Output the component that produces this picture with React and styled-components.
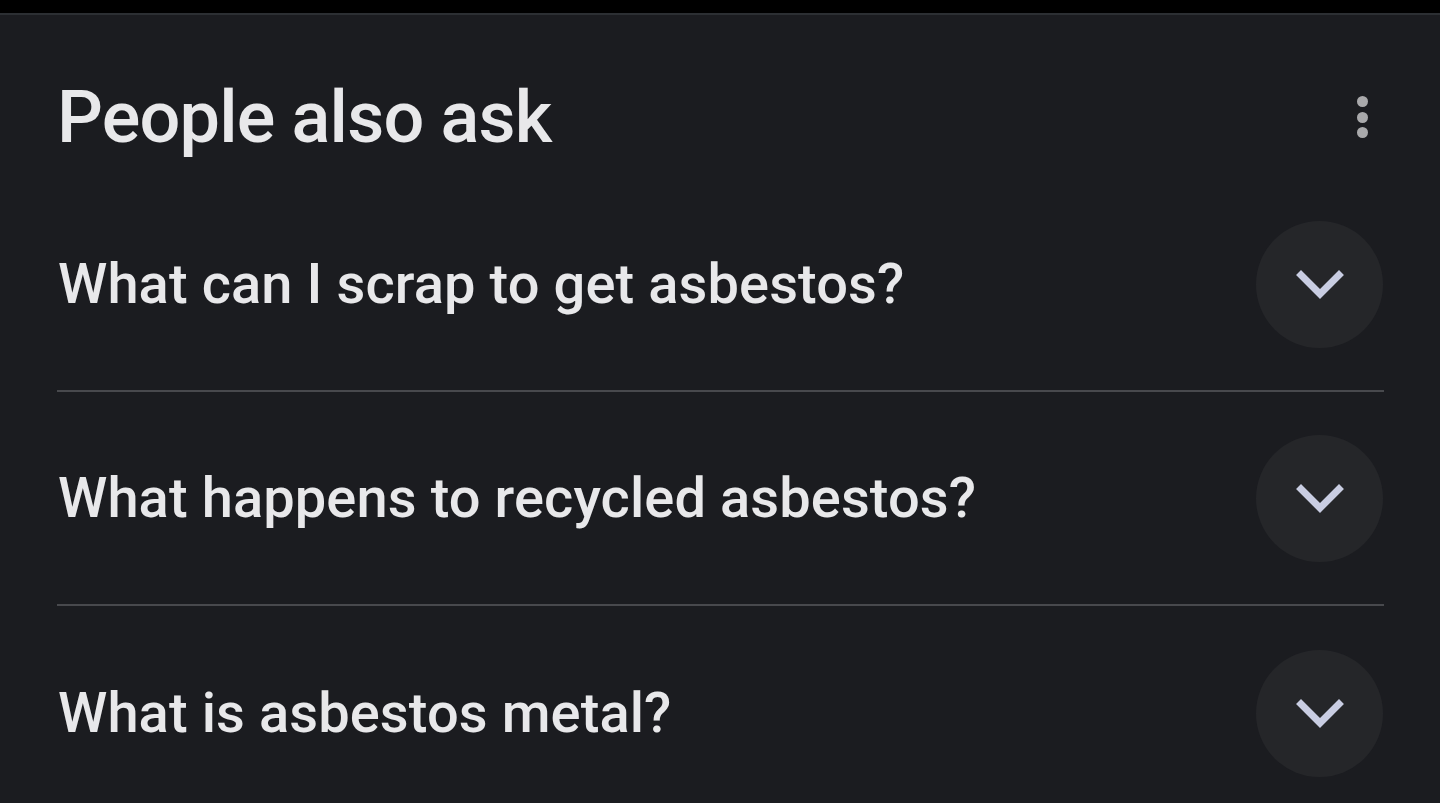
import React from "react";
import styled, { createGlobalStyle } from "styled-components";

const Global = createGlobalStyle`
  html, body { margin: 0; padding: 0; background: #000; }
  body { font-family: Roboto, "Noto Sans", sans-serif; }
  #root { min-height: 803px; }
`;

const Screen = styled.div`
  width: 1440px;
  height: 803px;
  background: #000;
  display: flex;
  flex-direction: column;
  overflow: hidden;
`;

const StatusStrip = styled.div`
  height: 13px;
  flex: none;
  background: #000;
`;

const Card = styled.section`
  flex: 1;
  background: #1b1c20;
  border-top: 2px solid #2c2f33;
  padding: 0 56px 0 57px;
  display: flex;
  flex-direction: column;
`;

const Header = styled.header`
  height: 163px;
  padding-top: 41px;
  box-sizing: border-box;
  display: flex;
  align-items: center;
  justify-content: space-between;
`;

const Title = styled.h2`
  margin: 0;
  font-family: Roboto, sans-serif;
  font-weight: 500;
  font-size: 72px;
  color: #e8e8ea;
  letter-spacing: -0.8px;
`;

const MenuButton = styled.button`
  width: 44px;
  height: 60px;
  border: 0;
  padding: 0;
  background: transparent;
  display: flex;
  flex-direction: column;
  align-items: center;
  justify-content: center;
  gap: 4.5px;
`;

const Dot = styled.span`
  width: 11px;
  height: 11px;
  border-radius: 50%;
  background: #a9a9ab;
`;

const List = styled.div`
  display: flex;
  flex-direction: column;
`;

const Row = styled.div`
  height: 214px;
  box-sizing: border-box;
  display: flex;
  align-items: center;
  justify-content: space-between;
  border-bottom: ${(p) => (p.$last ? "none" : "2px solid #48494d")};
`;

const Question = styled.span`
  font-family: Roboto, sans-serif;
  font-weight: 500;
  font-size: 56px;
  color: #e8e8ea;
  padding-left: 1px;
  letter-spacing: 0.1px;
`;

const Toggle = styled.button`
  width: 127px;
  height: 127px;
  border-radius: 50%;
  border: 0;
  padding: 0;
  margin-right: 1px;
  background: #252629;
  display: flex;
  align-items: center;
  justify-content: center;
`;

const Chevron = () => (
  <svg width="48" height="30" viewBox="0 0 48 30">
    <polyline
      points="5,6 24,25 43,6"
      fill="none"
      stroke="#c9cde2"
      strokeWidth="7"
      strokeLinecap="square"
    />
  </svg>
);

const questions = [
  "What can I scrap to get asbestos?",
  "What happens to recycled asbestos?",
  "What is asbestos metal?",
];

export default function App() {
  return (
    <Screen>
      <Global />
      <StatusStrip />
      <Card>
        <Header>
          <Title>People also ask</Title>
          <MenuButton aria-label="More options">
            <Dot />
            <Dot />
            <Dot />
          </MenuButton>
        </Header>
        <List>
          {questions.map((q, i) => (
            <Row key={q} $last={i === questions.length - 1}>
              <Question>{q}</Question>
              <Toggle aria-label="Expand">
                <Chevron />
              </Toggle>
            </Row>
          ))}
        </List>
      </Card>
    </Screen>
  );
}
